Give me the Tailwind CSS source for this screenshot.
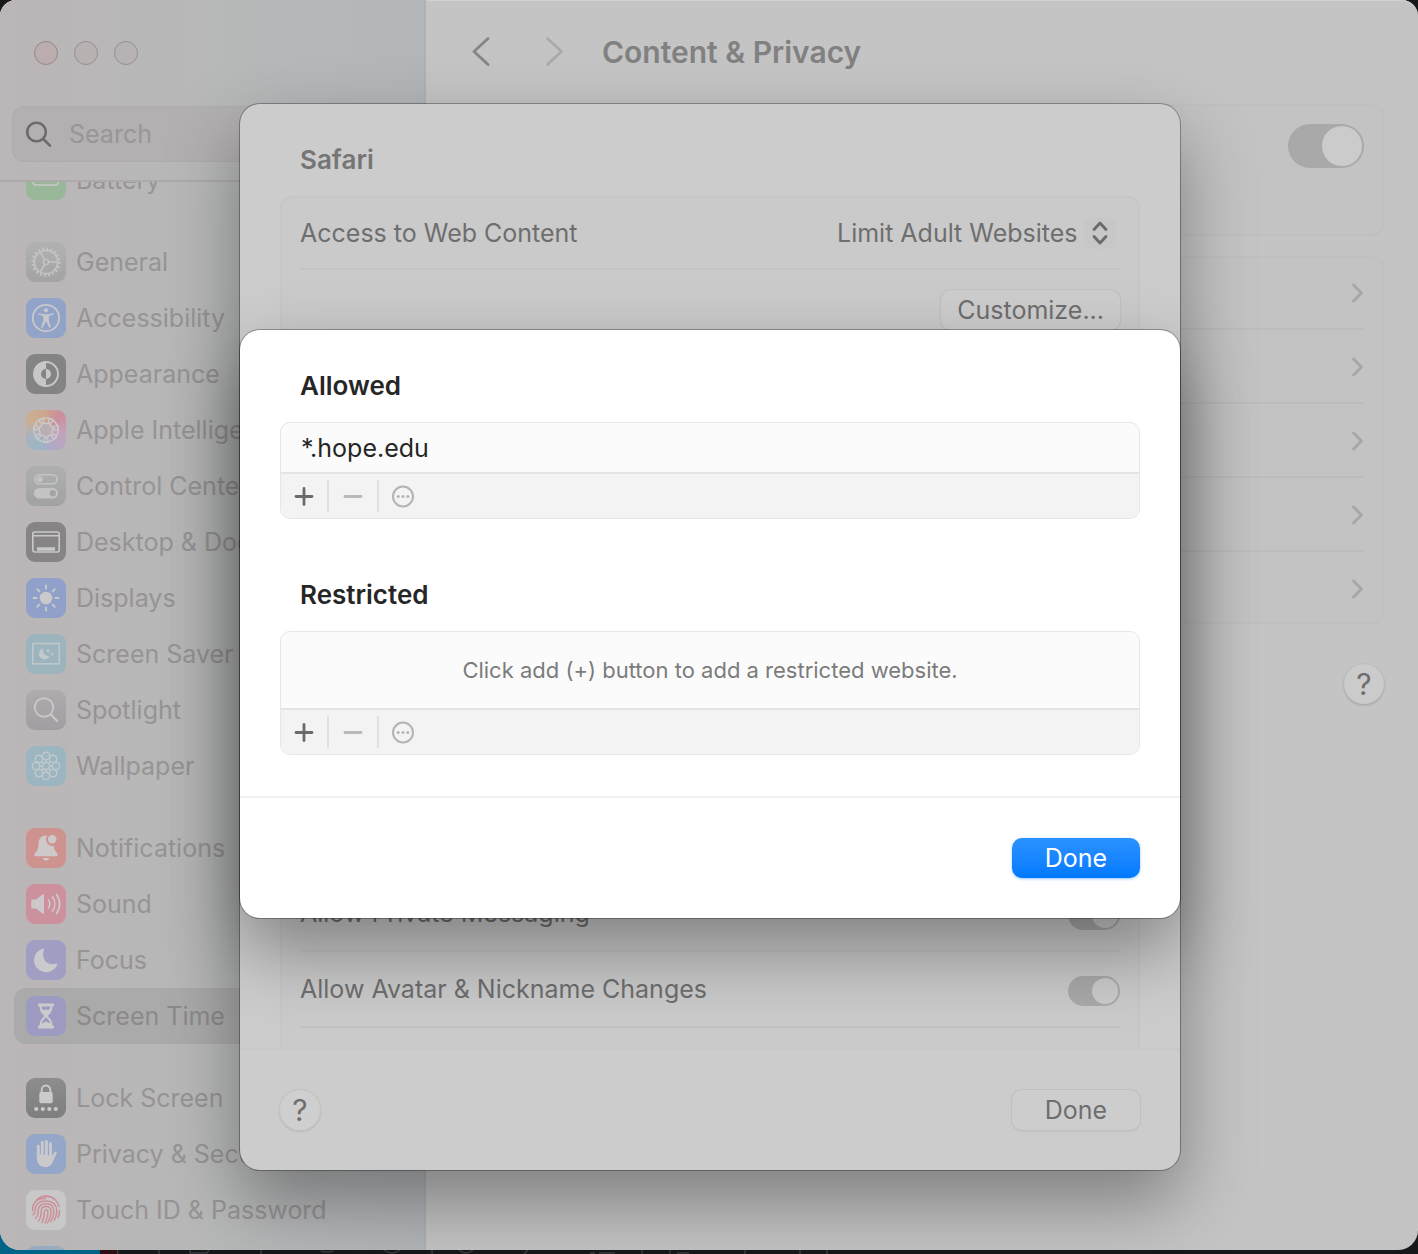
<!DOCTYPE html>
<html lang="en">

<head>
    <meta charset="UTF-8" />
    <meta name="viewport" content="width=device-width, initial-scale=1.0" />
    <title>Content &amp; Privacy</title>
    <!-- Tailwind CSS via CDN -->
    <script src="https://cdn.jsdelivr.net/npm/@tailwindcss/browser@4"></script>
</head>

<body class="relative h-screen overflow-hidden bg-[#17181a] pb-1 font-[Inter,sans-serif] text-[25px] leading-8 text-[#6e6e6e]">
    <!-- Desktop showing below the window -->
    <div class="absolute inset-x-0 bottom-0 flex h-10 items-end">
        <div class="h-10 w-[100px] bg-[#006489]"></div>
        <div class="h-10 w-[17px] bg-[#2c0f14]"></div>
        <svg class="h-1 w-[800px]" viewBox="0 0 800 4" fill="none" stroke="#3c3c40" stroke-width="1.500">
            <path d="M.7 0v4M42 0v4M144 0v4M315 0v4M525 0v4M553 0v4M628 0v4M683 0v4M710 0v4" />
            <path d="M73 0v3h17l2-3M204 1q6 2 12 0M267 0q8 6 16 0M342 0q7 6 14 0M407 4l4-4M473 3h5M482 3h16M560 3h12" />
        </svg>
    </div>

    <!-- Settings window -->
    <div class="relative flex h-full overflow-hidden rounded-t-2xl rounded-b-[20px] bg-[#c4c4c4] shadow-[inset_0_1px_0_#d0d0d0]">

        <!-- Sidebar -->
        <aside class="flex w-[426px] shrink-0 flex-col border-r-2 border-[#b0b1b1] bg-linear-to-r from-[#bbb6b7] via-[#b7b8b8] to-[#b3b6b9] text-[#969495]">
            <div class="h-[182px] shrink-0 border-b-2 border-[#acaaaa] px-3">
                <div class="flex h-[106px] items-center gap-4 pl-[22px]">
                    <button aria-label="Close" class="size-6 rounded-full border border-[#948788] bg-[#bbadad]"></button>
                    <button aria-label="Minimize" class="size-6 rounded-full border border-[#948f90] bg-[#b7b1b2]"></button>
                    <button aria-label="Zoom" class="size-6 rounded-full border border-[#948f90] bg-[#b7b3b4]"></button>
                </div>
                <label class="flex h-14 items-center gap-4 rounded-xl border border-[#adabab] bg-[#b2b0b0] pl-3">
                    <svg class="size-7 shrink-0" viewBox="0 0 28 28" fill="none" stroke="#6c6a6a" stroke-width="2.600" stroke-linecap="round">
                        <circle cx="11.500" cy="12" r="9.300" />
                        <path d="M18.300 19 25 25.700" />
                    </svg>
                    <input type="search" placeholder="Search" aria-label="Search" class="w-full min-w-0 bg-transparent placeholder:text-[#989696] focus:outline-none" />
                </label>
            </div>

            <nav class="min-h-0 flex-1 overflow-hidden px-[14px]">
                <div class="-mt-[30px] flex flex-col gap-[26px] whitespace-nowrap">
                    <a href="#" class="flex h-14 items-center gap-[10px] px-3">
                        <svg class="size-10 rounded-[9px] bg-[#99b799]" viewBox="0 0 40 40" fill="none" stroke="#c9cac9" stroke-width="1.500">
                            <rect x="7" y="13" width="25" height="12" rx="3" />
                            <path d="M34 17v4" stroke-linecap="round" />
                        </svg>
                        Battery
                    </a>

                    <div>
                        <a href="#" class="flex h-14 items-center gap-[10px] px-3">
                            <svg class="size-10 rounded-[9px] bg-linear-to-b from-[#b0b1b1] to-[#a2a2a3] opacity-90" viewBox="0 0 40 40" fill="none" stroke="#c6c5c5">
                                <circle cx="20" cy="20" r="13.500" stroke-width="2.400" stroke-dasharray="1.900 2.340" />
                                <circle cx="20" cy="20" r="11.700" stroke-width="1.700" />
                                <circle cx="20" cy="20" r="2.600" stroke-width="1.500" />
                                <path d="M22.600 20H31M18.700 17.700 14.300 10M18.700 22.300 14.300 30" stroke-width="1.700" />
                            </svg>
                            General
                        </a>
                        <a href="#" class="flex h-14 items-center gap-[10px] px-3">
                            <svg class="size-10 rounded-[9px] bg-[#8fa3c9] opacity-95" viewBox="0 0 40 40" fill="#c9cacb">
                                <circle cx="20" cy="20" r="13.200" fill="none" stroke="#c9cacb" stroke-width="1.800" />
                                <circle cx="20" cy="12.300" r="2.100" />
                                <path d="M13 15.200l5 1h4l5-1c1-.2 1.300 1 .4 1.400l-4.600 1.500v4.400l2 6.300c.3 1.200-1.200 1.600-1.700.5L20.300 23.500h-.6l-2.800 5.800c-.5 1.100-2 .7-1.700-.5l2-6.300v-4.400l-4.600-1.500c-.9-.4-.6-1.600.4-1.400z" />
                            </svg>
                            Accessibility
                        </a>
                        <a href="#" class="flex h-14 items-center gap-[10px] px-3">
                            <svg class="size-10 rounded-[9px] bg-[#858484]" viewBox="0 0 40 40" fill="#c8c7c7">
                                <circle cx="20" cy="20" r="12" fill="none" stroke="#c8c7c7" stroke-width="1.900" />
                                <path d="M20 8a12 12 0 0 0 0 24v-7a5 5 0 0 1 0-10z" />
                                <path d="M20 15a5 5 0 0 1 0 10z" />
                            </svg>
                            Appearance
                        </a>
                        <a href="#" class="flex h-14 items-center gap-[10px] px-3">
                            <svg class="size-10 rounded-[9px] bg-[conic-gradient(from_45deg,#cf8a99,#c4a0bd,#b6a6c6,#98b5c8,#a9b3bf,#cfae90,#cfa688,#cf8a99)] opacity-90" viewBox="0 0 40 40" fill="none" stroke="#cccacb" stroke-width="1.500">
                                <circle cx="20" cy="20" r="8" fill="#b9afb3" stroke="none" />
                                <ellipse cx="20" cy="10.700" rx="6.500" ry="2.800" />
                                <ellipse cx="20" cy="10.700" rx="6.500" ry="2.800" transform="rotate(51.430 20 20)" />
                                <ellipse cx="20" cy="10.700" rx="6.500" ry="2.800" transform="rotate(102.860 20 20)" />
                                <ellipse cx="20" cy="10.700" rx="6.500" ry="2.800" transform="rotate(154.290 20 20)" />
                                <ellipse cx="20" cy="10.700" rx="6.500" ry="2.800" transform="rotate(205.710 20 20)" />
                                <ellipse cx="20" cy="10.700" rx="6.500" ry="2.800" transform="rotate(257.140 20 20)" />
                                <ellipse cx="20" cy="10.700" rx="6.500" ry="2.800" transform="rotate(308.570 20 20)" />
                            </svg>
                            Apple Intelligence &amp; Siri
                        </a>
                        <a href="#" class="flex h-14 items-center gap-[10px] px-3">
                            <svg class="size-10 rounded-[9px] bg-linear-to-b from-[#aeafaf] to-[#9fa0a1] opacity-90" viewBox="0 0 40 40">
                                <rect x="8.800" y="8.800" width="22.400" height="9" rx="4.500" fill="none" stroke="#c7c6c6" stroke-width="1.600" />
                                <circle cx="13.700" cy="13.300" r="3" fill="#c7c6c6" />
                                <rect x="8" y="22" width="24" height="10.400" rx="5.200" fill="#c7c6c6" />
                                <circle cx="26.800" cy="27.200" r="3.200" fill="#a3a3a4" />
                            </svg>
                            Control Center
                        </a>
                        <a href="#" class="flex h-14 items-center gap-[10px] px-3">
                            <svg class="size-10 rounded-[9px] bg-[#868485]" viewBox="0 0 40 40" fill="none" stroke="#c9c8c8" stroke-width="1.600">
                                <rect x="6.800" y="10" width="26.400" height="20" rx="2" />
                                <path d="M7 13.800h26" />
                                <path d="M11 27h18" stroke-width="3.600" />
                            </svg>
                            Desktop &amp; Dock
                        </a>
                        <a href="#" class="flex h-14 items-center gap-[10px] px-3">
                            <svg class="size-10 rounded-[9px] bg-[#8f9fcb] opacity-95" viewBox="0 0 40 40" fill="none" stroke="#cccccd" stroke-width="1.900" stroke-linecap="round">
                                <circle cx="20" cy="20" r="6.300" fill="#cccccd" stroke="none" />
                                <path d="M20 7.500v3M20 29.500v3M7.500 20h3M29.500 20h3M11.200 11.200l2.100 2.100M26.700 26.700l2.100 2.100M11.200 28.800l2.100-2.100M26.700 13.300l2.100-2.100" />
                            </svg>
                            Displays
                        </a>
                        <a href="#" class="flex h-14 items-center gap-[10px] px-3">
                            <svg class="size-10 rounded-[9px] bg-[#9ab4be] opacity-95" viewBox="0 0 40 40">
                                <rect x="6.800" y="9.500" width="26.400" height="20.300" fill="none" stroke="#bfc8cb" stroke-width="1.600" />
                                <path d="M17 14.500a5.500 5.500 0 1 0 6.500 7.500 5.800 5.800 0 0 1-6.500-7.500z" fill="#c4cbcd" />
                                <path d="M22 14.200l.7 1.700 1.700.6-1.700.7-.7 1.700-.7-1.700-1.700-.7 1.700-.6zM26 18l.6 1.400 1.500.6-1.500.6-.6 1.500-.6-1.500-1.400-.6 1.400-.6z" fill="#c4cbcd" />
                            </svg>
                            Screen Saver
                        </a>
                        <a href="#" class="flex h-14 items-center gap-[10px] px-3">
                            <svg class="size-10 rounded-[9px] bg-linear-to-b from-[#adabac] to-[#9f9ca0] opacity-90" viewBox="0 0 40 40" fill="none" stroke="#cbcacb" stroke-width="1.900" stroke-linecap="round">
                                <circle cx="18" cy="17.500" r="9.300" />
                                <path d="M24.800 24.500 31.200 31" stroke-width="2.200" />
                            </svg>
                            Spotlight
                        </a>
                        <a href="#" class="flex h-14 items-center gap-[10px] px-3">
                            <svg class="size-10 rounded-[9px] bg-[#9ab6c1] opacity-95" viewBox="0 0 40 40" fill="none" stroke="#c3cbce" stroke-width="1.400">
                                <circle cx="20" cy="20" r="3.500" />
                                <circle cx="20" cy="10" r="3.700" />
                                <circle cx="27.100" cy="12.900" r="3.700" />
                                <circle cx="30" cy="20" r="3.700" />
                                <circle cx="27.100" cy="27.100" r="3.700" />
                                <circle cx="20" cy="30" r="3.700" />
                                <circle cx="12.900" cy="27.100" r="3.700" />
                                <circle cx="10" cy="20" r="3.700" />
                                <circle cx="12.900" cy="12.900" r="3.700" />
                                <path d="M20 16.500v-3M20 23.500v3M16.500 20h-3M23.500 20h3M17.500 17.500l-2-2M22.500 22.500l2 2M17.500 22.500l-2 2M22.500 17.500l2-2" />
                            </svg>
                            Wallpaper
                        </a>
                    </div>

                    <div>
                        <a href="#" class="flex h-14 items-center gap-[10px] px-3">
                            <svg class="size-10 rounded-[9px] bg-[#d0918d] opacity-95" viewBox="0 0 40 40" fill="#cfcaca">
                                <path d="M20 7.500c-4.800 0-7.300 3.300-7.500 8-.2 5.500-1.200 7.200-3.500 9.500-1.400 1.600-.8 3.200 1 3.200h20c1.800 0 2.400-1.600 1-3.200-2-2.200-3-3.600-3.400-7.200A6.300 6.300 0 0 1 21.500 7.600z" />
                                <path d="M16.800 30h6.400c-.4 1.700-1.500 2.600-3.200 2.600S17.200 31.700 16.800 30z" />
                                <circle cx="26.200" cy="11.200" r="4.200" />
                            </svg>
                            Notifications
                        </a>
                        <a href="#" class="flex h-14 items-center gap-[10px] px-3">
                            <svg class="size-10 rounded-[9px] bg-[#cf909c] opacity-95" viewBox="0 0 40 40" fill="none" stroke="#cfcacb" stroke-width="1.700" stroke-linecap="round">
                                <path d="M6.500 15.500H10l6.500-5c.7-.5 1.500-.1 1.500.8v17.400c0 .9-.8 1.300-1.500.8l-6.500-5H6.500c-.8 0-1.200-.5-1.200-1.200v-6.600c0-.7.4-1.200 1.200-1.200z" fill="#cfcacb" stroke="none" />
                                <path d="M22.500 16a7 7 0 0 1 0 8M26.500 13a12 12 0 0 1 0 14M30.500 10.500a16 16 0 0 1 0 19" />
                            </svg>
                            Sound
                        </a>
                        <a href="#" class="flex h-14 items-center gap-[10px] px-3">
                            <svg class="size-10 rounded-[9px] bg-[#9f9dc4] opacity-95" viewBox="0 0 40 40" fill="#cbcbcd">
                                <path d="M17 8.600A12 12 0 1 0 31.400 24.200c.2-.7-.4-1-1-.7C21.500 26.500 14.500 19 18 9.500c.3-.7-.3-1.200-1-.9z" />
                            </svg>
                            Focus
                        </a>
                        <a href="#" aria-current="page" class="flex h-14 items-center gap-[10px] rounded-xl bg-[#abaaaa] px-3 text-[#8b8989]">
                            <svg class="size-10 rounded-[9px] bg-[#9c9ac1]" viewBox="0 0 40 40" fill="#cbcbcd">
                                <path d="M13 7.500h14c1.500 0 1.500 3 0 3h-.6c0 4.500-1.800 7-4.800 9.500 3 2.500 4.800 5 4.800 9.500h.6c1.500 0 1.500 3 0 3H13c-1.500 0-1.500-3 0-3h.6c0-4.500 1.800-7 4.800-9.500-3-2.500-4.800-5-4.800-9.500H13c-1.500 0-1.500-3 0-3z" />
                                <path d="M15.800 10.500h8.400c0 1.300-.3 2.300-.8 3.300h-6.800c-.5-1-.8-2-.8-3.300zM20 21.300c2.800 2.200 4 4.300 4.200 6.300L20 25.500l-4.200 2.100c.2-2 1.400-4.100 4.200-6.300z" fill="#9c9ac1" />
                            </svg>
                            Screen Time
                        </a>
                    </div>

                    <div>
                        <a href="#" class="flex h-14 items-center gap-[10px] px-3">
                            <svg class="size-10 rounded-[9px] bg-linear-to-b from-[#8e8d8d] to-[#7e7e7e]" viewBox="0 0 40 40" fill="#cbcbcb">
                                <rect x="13.300" y="14" width="13.400" height="11.300" rx="1.800" />
                                <path d="M15.700 14.500v-2.700a4.300 4.300 0 0 1 8.600 0v2.700" fill="none" stroke="#cbcbcb" stroke-width="1.900" />
                                <circle cx="10.200" cy="31" r="2.100" />
                                <circle cx="16.800" cy="31" r="2.100" />
                                <circle cx="23.300" cy="31" r="2.100" />
                                <circle cx="29.800" cy="31" r="2.100" />
                            </svg>
                            Lock Screen
                        </a>
                        <a href="#" class="flex h-14 items-center gap-[10px] px-3">
                            <svg class="size-10 rounded-[9px] bg-[#92a7cb] opacity-95" viewBox="0 0 40 40" fill="none" stroke="#cbccce" stroke-width="2.900" stroke-linecap="round">
                                <path d="M12.300 12.200v12M16.300 8.500v14M20.400 7.500v14M24.500 9.800v13" />
                                <path d="M10.900 20v4.500c0 5.300 3.500 8.500 8.300 8.500 4.300 0 6.600-2.300 8.200-6.300l3.300-7.600c.6-1.600-1.400-2.300-2.300-.9L26 22z" fill="#cbccce" stroke="none" />
                            </svg>
                            Privacy &amp; Security
                        </a>
                        <a href="#" class="flex h-14 items-center gap-[10px] px-3">
                            <svg class="size-10 rounded-[9px] bg-[#c9c8c8]" viewBox="0 0 40 40" fill="none" stroke="#cc8f99" stroke-width="1.500" stroke-linecap="round">
                                <path d="M11 9.500a14 14 0 0 1 18 0" />
                                <path d="M7 16.500a13.300 13.300 0 0 1 26 0M6.500 20.500c0-12 10-12.300 13.500-12M33.500 20.500c.2 3-.5 5-1.500 7" />
                                <path d="M7 25c2-2 2.200-4 2.300-6 .5-6 5-8 10.700-8 6.500 0 10.500 3.500 10.800 9.500 0 4-.8 6.700-2.500 10" />
                                <path d="M9.500 28.500c2.400-2.600 2.700-5.500 2.700-8.500.3-4 3.300-6.200 7.800-6.200 5 0 7.800 3 7.900 7.200 0 5-1.500 8-3.200 11" />
                                <path d="M12.500 31c2.200-3 2.800-6.500 2.800-10.500 0-2.700 2-4 4.700-4 3.200 0 5 2 5 5 0 4.500-1.600 8-3.600 11.500" />
                                <path d="M16 32.500c2-4 2.400-7 2.400-11 0-1.200.7-1.800 1.600-1.800 1.300 0 2 1 2 2.300 0 4-1 7-3 11" />
                            </svg>
                            Touch ID &amp; Password
                        </a>
                        <a href="#" aria-label="Users and Groups" class="flex h-14 items-center px-3">
                            <span class="size-10 rounded-[9px] bg-[#98abc0]"></span>
                        </a>
                    </div>
                </div>
            </nav>
        </aside>

        <!-- Main pane -->
        <main class="flex min-w-0 flex-1 flex-col px-[34px]">
            <header class="flex h-[104px] items-center">
                <button aria-label="Back" class="mr-10 ml-1">
                    <svg class="size-9" viewBox="0 0 36 36" fill="none" stroke="#858585" stroke-width="2.800" stroke-linecap="round" stroke-linejoin="round">
                        <path d="M24 4.500 10 17.500 24 30.500" />
                    </svg>
                </button>
                <button aria-label="Forward" disabled>
                    <svg class="size-9" viewBox="0 0 36 36" fill="none" stroke="#aaaaaa" stroke-width="2.800" stroke-linecap="round" stroke-linejoin="round">
                        <path d="M7.500 4.500 21.500 17.500 7.500 30.500" />
                    </svg>
                </button>
                <h1 class="ml-[26px] text-[30px] font-semibold text-[#818181]">Content &amp; Privacy</h1>
            </header>

            <section class="flex h-[132px] justify-end rounded-xl bg-[#c3c3c3] p-5 inset-ring-2 inset-ring-[#c0c0c0]">
                <input type="checkbox" checked aria-label="Content and Privacy" class="h-11 w-[76px] appearance-none rounded-full bg-[#a9a9a9] p-0.5 before:ml-auto before:block before:size-10 before:rounded-full before:bg-[#cbcbcb]" />
            </section>

            <section class="mt-5 rounded-xl bg-[#c3c3c3] px-5 inset-ring-2 inset-ring-[#c0c0c0]">
                <a href="#" aria-label="Store Restrictions" class="flex h-[74px] items-center justify-end border-b-2 border-[#bcbcbc]">
                    <svg class="h-6 w-[14px]" viewBox="0 0 14 24" fill="none" stroke="#a6a6a6" stroke-width="2.800" stroke-linecap="round" stroke-linejoin="round"><path d="M3.500 5l8 8-8 8" /></svg>
                </a>
                <a href="#" aria-label="Intelligence" class="flex h-[74px] items-center justify-end border-b-2 border-[#bcbcbc]">
                    <svg class="h-6 w-[14px]" viewBox="0 0 14 24" fill="none" stroke="#a6a6a6" stroke-width="2.800" stroke-linecap="round" stroke-linejoin="round"><path d="M3.500 5l8 8-8 8" /></svg>
                </a>
                <a href="#" aria-label="Content Restrictions" class="flex h-[74px] items-center justify-end border-b-2 border-[#bcbcbc]">
                    <svg class="h-6 w-[14px]" viewBox="0 0 14 24" fill="none" stroke="#a6a6a6" stroke-width="2.800" stroke-linecap="round" stroke-linejoin="round"><path d="M3.500 5l8 8-8 8" /></svg>
                </a>
                <a href="#" aria-label="App Restrictions" class="flex h-[74px] items-center justify-end border-b-2 border-[#bcbcbc]">
                    <svg class="h-6 w-[14px]" viewBox="0 0 14 24" fill="none" stroke="#a6a6a6" stroke-width="2.800" stroke-linecap="round" stroke-linejoin="round"><path d="M3.500 5l8 8-8 8" /></svg>
                </a>
                <a href="#" aria-label="Preference Restrictions" class="flex h-[72px] items-center justify-end">
                    <svg class="h-6 w-[14px]" viewBox="0 0 14 24" fill="none" stroke="#a6a6a6" stroke-width="2.800" stroke-linecap="round" stroke-linejoin="round"><path d="M3.500 5l8 8-8 8" /></svg>
                </a>
            </section>

            <button class="mt-10 size-10 self-end rounded-full bg-[#cbcbcb] text-[30px] shadow-[0_1px_3px_rgba(0,0,0,0.2)]">?</button>
        </main>
    </div>

    <!-- Content restrictions sheet -->
    <div class="absolute inset-x-0 top-[104px] bottom-[84px] flex justify-center pl-0.5">
        <section class="flex w-[940px] flex-col overflow-hidden rounded-[20px] bg-[#cccccc] shadow-[0_0_0_1px_rgba(0,0,0,0.3),0_32px_72px_rgba(0,0,0,0.36)]">
            <div class="flex min-h-0 flex-1 flex-col overflow-hidden px-10 pt-10">
                <h2 class="pb-5 pl-5 text-[26px] leading-8 font-semibold text-[#757575]">Safari</h2>
                <div class="flex flex-1 flex-col rounded-t-xl border-x-2 border-t-2 border-[#c6c6c6] bg-[#cacaca] px-[18px]">
                    <div class="flex h-[72px] items-center justify-between border-b-2 border-[#c4c4c4]">
                        <label for="access">Access to Web Content</label>
                        <div class="relative mr-1 flex items-center">
                            <select id="access" class="appearance-none bg-transparent pr-[38px]">
                                <option>Limit Adult Websites</option>
                            </select>
                            <svg class="pointer-events-none absolute right-0 size-8 rounded-lg bg-[#c7c7c7]" viewBox="0 0 32 32" fill="none" stroke="#6b6b6b" stroke-width="2.900" stroke-linecap="round" stroke-linejoin="round">
                                <path d="M10 12.500l6-6.500 6 6.500M10 19.500l6 6.500 6-6.500" />
                            </svg>
                        </div>
                    </div>
                    <div class="flex h-20 items-center justify-end">
                        <button class="h-10 rounded-[10px] bg-[#cdcdcd] px-4 shadow-[0_0_0_1px_#c0c0c0,0_1px_2px_rgba(0,0,0,0.15)]">Customize...</button>
                    </div>
                    <div class="mt-auto flex h-[76px] items-center justify-between border-b-2 border-[#c3c3c3]">
                        <label for="messaging">Allow Private Messaging</label>
                        <input type="checkbox" id="messaging" checked class="mt-1 h-[30px] w-[52px] appearance-none rounded-full bg-[#a9a9a9] p-0.5 before:ml-auto before:block before:size-[26px] before:rounded-full before:bg-[#cbcbcb]" />
                    </div>
                    <div class="flex h-[76px] items-center justify-between border-b-2 border-[#c3c3c3]">
                        <label for="avatar">Allow Avatar &amp; Nickname Changes</label>
                        <input type="checkbox" id="avatar" checked class="mt-1 h-[30px] w-[52px] appearance-none rounded-full bg-[#a9a9a9] p-0.5 before:ml-auto before:block before:size-[26px] before:rounded-full before:bg-[#cbcbcb]" />
                    </div>
                    <div class="h-5 shrink-0"></div>
                </div>
            </div>
            <footer class="flex h-[122px] items-center justify-between border-t-2 border-[#c8c8c8] px-10">
                <button class="size-10 rounded-full bg-[#cfcfcf] text-[30px] shadow-[0_0_0_1px_#c3c3c3,0_1px_3px_rgba(0,0,0,0.2)]">?</button>
                <button class="h-10 w-32 rounded-[10px] bg-[#cdcdcd] shadow-[0_0_0_1px_#c0c0c0,0_1px_2px_rgba(0,0,0,0.15)]">Done</button>
            </footer>
        </section>
    </div>

    <!-- Customize websites sheet -->
    <div class="absolute inset-x-0 top-[330px] flex justify-center pl-0.5">
        <section role="dialog" aria-label="Customize websites" class="w-[940px] rounded-[20px] bg-white text-[#262626] shadow-[0_0_0_1px_rgba(0,0,0,0.3),0_32px_72px_rgba(0,0,0,0.36)]">
            <div class="flex flex-col gap-[60px] px-10 pt-10 pb-[41px]">
                <div>
                    <h2 class="pb-5 pl-5 text-[26px] leading-8 font-semibold">Allowed</h2>
                    <div class="overflow-hidden rounded-[10px] border border-[#e6e6e6] bg-[#fbfbfb]">
                        <div class="flex h-[49px] items-center pl-5">*.hope.edu</div>
                        <div class="flex h-[46px] items-center border-t-2 border-[#e4e4e4] bg-[#f3f3f3]">
                            <button aria-label="Add allowed website" class="flex w-[46px] justify-center">
                                <svg class="size-6" viewBox="0 0 24 24" fill="none" stroke="#6a6a6a" stroke-width="2.800" stroke-linecap="round"><path d="M12 4.500v16M4 12.500h16" /></svg>
                            </button>
                            <span class="h-8 w-0.5 bg-[#e0e0e0]"></span>
                            <button aria-label="Remove allowed website" disabled class="flex w-12 justify-center">
                                <svg class="size-6" viewBox="0 0 24 24" fill="none" stroke="#b9b9b9" stroke-width="2.800" stroke-linecap="round"><path d="M4 12.500h16" /></svg>
                            </button>
                            <span class="h-8 w-0.5 bg-[#e0e0e0]"></span>
                            <button aria-label="More options" disabled class="flex w-12 justify-center">
                                <svg class="size-6" viewBox="0 0 24 24" fill="#b4b4b4"><circle cx="12" cy="12.500" r="10" fill="none" stroke="#b4b4b4" stroke-width="2" /><circle cx="7.200" cy="12.500" r="1.500" /><circle cx="12" cy="12.500" r="1.500" /><circle cx="16.800" cy="12.500" r="1.500" /></svg>
                            </button>
                        </div>
                    </div>
                </div>
                <div>
                    <h2 class="pb-5 pl-5 text-[26px] leading-8 font-semibold">Restricted</h2>
                    <div class="overflow-hidden rounded-[10px] border border-[#e6e6e6] bg-[#fbfbfb]">
                        <div class="flex h-[76px] items-center justify-center text-[22px] text-[#7c7c7c]">Click add (+) button to add a restricted website.</div>
                        <div class="flex h-[46px] items-center border-t-2 border-[#e4e4e4] bg-[#f3f3f3]">
                            <button aria-label="Add restricted website" class="flex w-[46px] justify-center">
                                <svg class="size-6" viewBox="0 0 24 24" fill="none" stroke="#6a6a6a" stroke-width="2.800" stroke-linecap="round"><path d="M12 4.500v16M4 12.500h16" /></svg>
                            </button>
                            <span class="h-8 w-0.5 bg-[#e0e0e0]"></span>
                            <button aria-label="Remove restricted website" disabled class="flex w-12 justify-center">
                                <svg class="size-6" viewBox="0 0 24 24" fill="none" stroke="#b9b9b9" stroke-width="2.800" stroke-linecap="round"><path d="M4 12.500h16" /></svg>
                            </button>
                            <span class="h-8 w-0.5 bg-[#e0e0e0]"></span>
                            <button aria-label="More options" disabled class="flex w-12 justify-center">
                                <svg class="size-6" viewBox="0 0 24 24" fill="#b4b4b4"><circle cx="12" cy="12.500" r="10" fill="none" stroke="#b4b4b4" stroke-width="2" /><circle cx="7.200" cy="12.500" r="1.500" /><circle cx="12" cy="12.500" r="1.500" /><circle cx="16.800" cy="12.500" r="1.500" /></svg>
                            </button>
                        </div>
                    </div>
                </div>
            </div>
            <footer class="flex justify-end border-t-2 border-[#f0f0f0] p-10">
                <button class="h-10 w-32 rounded-[10px] bg-linear-to-b from-[#2a92ff] to-[#0079ff] text-white shadow-[0_1px_3px_rgba(0,122,255,0.4)]">Done</button>
            </footer>
        </section>
    </div>
</body>

</html>
